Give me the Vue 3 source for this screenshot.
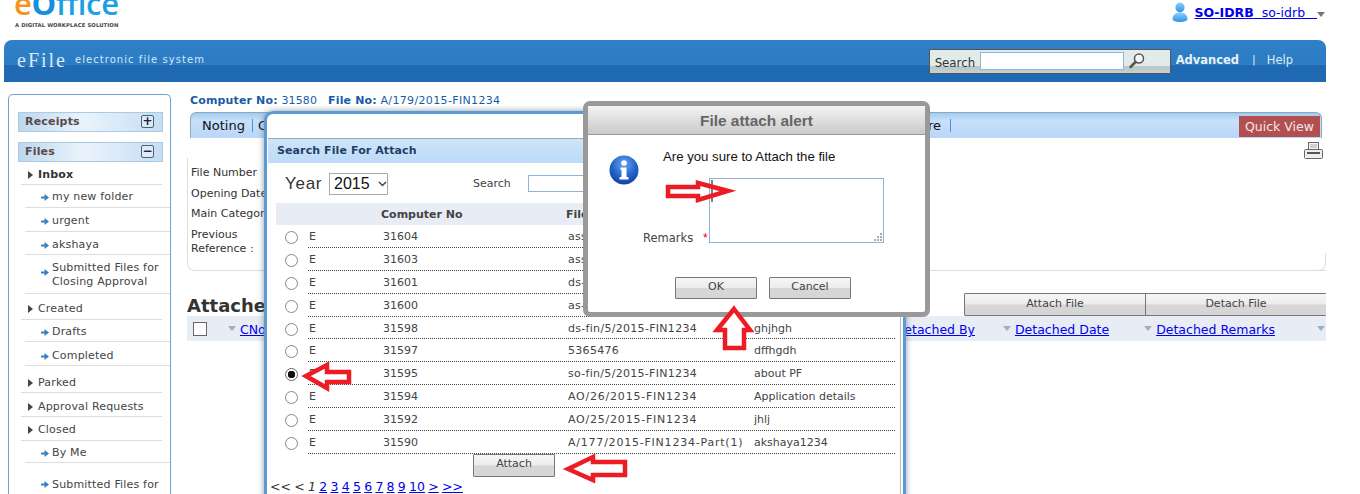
<script setup>
const sideRows = [
  { t: 'Inbox', h: 23, main: true, bold: true },
  { t: 'my new folder', h: 23 },
  { t: 'urgent', h: 24 },
  { t: 'akshaya', h: 23, lift: true },
  { t: 'Submitted Files for Closing Approval', h: 39, wide: true },
  { t: 'Created', h: 26, main: true },
  { t: 'Drafts', h: 22, lift: true },
  { t: 'Completed', h: 24, lift: true },
  { t: 'Parked', h: 27, main: true, lift: true },
  { t: 'Approval Requests', h: 24, main: true, lift: true },
  { t: 'Closed', h: 24, main: true },
  { t: 'By Me', h: 22, lift: true },
  { t: 'Submitted Files for Closing Approval', h: 46, wide: true, lift: true }
]
const files = [
  ['31604', 'assam/1/2015-FIN1234', 'asdf'],
  ['31603', 'assam/2/2015-FIN1234', 'asdf'],
  ['31601', 'ds-fin/7/2015-FIN1234', 'test'],
  ['31600', 'as-fin/3/2015-FIN1234', 'test'],
  ['31598', 'ds-fin/5/2015-FIN1234', 'ghjhgh'],
  ['31597', '5365476', 'dffhgdh'],
  ['31595', 'so-fin/5/2015-FIN1234', 'about PF'],
  ['31594', 'AO/26/2015-FIN1234', 'Application details'],
  ['31592', 'AO/25/2015-FIN1234', 'jhlj'],
  ['31590', 'A/177/2015-FIN1234-Part(1)', 'akshaya1234']
]
const pages = [2, 3, 4, 5, 6, 7, 8, 9, 10, '>', '>>']
</script>

<template>
  <div class="page">
    <header class="top">
      <div class="logo">
        <div class="logo-word"><span class="l-e">e</span><span class="l-o">O</span><span class="l-f">ffice</span></div>
        <div class="logo-tag">A DIGITAL WORKPLACE SOLUTION</div>
      </div>
      <div class="user">
        <svg width="16" height="20" viewBox="0 0 16 20">
          <defs><linearGradient id="ug" x1="0" y1="0" x2="0" y2="1"><stop offset="0" stop-color="#8fd0fa"/><stop offset="1" stop-color="#2f93e6"/></linearGradient></defs>
          <ellipse cx="8" cy="5.500" rx="4.600" ry="5" fill="url(#ug)"/>
          <path d="M0.500 17c0-4 3-6.500 7.500-6.500s7.500 2.500 7.500 6.500c0 1.800-3.500 3-7.500 3s-7.500-1.200-7.500-3z" fill="url(#ug)"/>
        </svg>
        <a class="user-link"><b>SO-IDRB</b>&nbsp; so-idrb &nbsp;&nbsp;</a>
        <i class="user-caret"></i>
      </div>
    </header>

    <div class="bar">
      <div class="brand"><span class="brand-name">eFile</span><span class="brand-sub">electronic file system</span></div>
      <div class="bar-right">
        <div class="search">
          <span class="search-label">Search</span>
          <span class="search-input"></span>
          <svg width="18" height="18" viewBox="0 0 18 18">
            <circle cx="11" cy="6.500" r="4.500" fill="#f4f7f6" stroke="#555" stroke-width="1.500"/>
            <path d="M7.500 10 L2.500 15" stroke="#555" stroke-width="2.500" stroke-linecap="round"/>
          </svg>
        </div>
        <b class="adv">Advanced</b><span class="pipe">|</span><span class="help">Help</span>
      </div>
    </div>

    <div class="layout">
      <aside class="side">
        <div class="side-head">Receipts<span class="pm">+</span></div>
        <div class="side-head second">Files<span class="pm">−</span></div>
        <div v-for="(r, i) in sideRows" :key="i" class="row" :class="{ main: r.main, bold: r.bold, lift: r.lift }" :style="{ height: r.h + 'px' }">
          <i v-if="r.main" class="tri"></i>
          <svg v-else class="arr" width="8" height="7" viewBox="0 0 8 7"><path d="M0 2.500h3.500V0L8 3.500 3.500 7V4.500H0z" fill="#3a7fc4"/></svg>
          <span :class="{ wrap: r.wide }">{{ r.t }}</span>
        </div>
      </aside>

      <main class="content">
        <div class="crumb"><b>Computer No:</b> 31580 &nbsp;&nbsp;<b>File No:</b> <span class="crumb-val">A/179/2015-FIN1234</span></div>
        <div class="tabs">
          <div class="tab-first">Noting</div><i class="tab-sep"></i><span class="tab-c">C</span>
          <span class="tab-re">re</span><i class="tab-sep last"></i>
          <span class="quick">Quick View</span>
        </div>
        <div class="print-row">
          <svg width="19" height="17" viewBox="0 0 19 17" fill="none" stroke="#666">
            <rect x="4.500" y="0.500" width="10" height="7" fill="#f4f4f4"/>
            <path d="M6 3h7M6 5h7" stroke="#aaa"/>
            <rect x="0.500" y="7.500" width="18" height="9" rx="1" fill="#eee"/>
            <rect x="3" y="10" width="13" height="2" fill="#555" stroke="none"/>
          </svg>
        </div>
        <section class="info">
          <div class="info-row">File Number</div>
          <div class="info-row">Opening Date</div>
          <div class="info-row">Main Category</div>
          <div class="info-row two">Previous<br>Reference :</div>
        </section>
        <div class="att-row">
          <h2>Attached Files</h2>
          <div class="att-btns"><button class="btn wide">Attach File</button><button class="btn wide">Detach File</button></div>
        </div>
        <div class="thead">
          <span class="cb"></span>
          <i class="drop first"></i><a class="cno">CNo</a>
          <a class="dby">Detached By</a>
          <i class="drop"></i><a class="ddate">Detached Date</a>
          <i class="drop"></i><a class="drem">Detached Remarks</a>
          <i class="drop end"></i>
        </div>
      </main>
    </div>

    <div class="modal">
      <div class="modal-title">Search File For Attach</div>
      <div class="filter">
        <span class="year">Year</span>
        <span class="select">2015<svg width="9" height="6" viewBox="0 0 9 6"><path d="M1 1l3.500 3.500L8 1" fill="none" stroke="#444" stroke-width="1.500"/></svg></span>
        <span class="f-search">Search</span><span class="f-input"></span>
      </div>
      <div class="grid-head"><span></span><span></span><b>Computer No</b><b class="h-file">File No</b></div>
      <div v-for="(f, i) in files" :key="f[0]" class="f-row">
        <input type="radio" class="radio" name="file" :checked="i === 6">
        <div class="f-cells">
          <span class="c-e">E</span><span class="c-no">{{ f[0] }}</span><span class="c-file" :class="{ caps: f[1][0] === 'A' }">{{ f[1] }}</span><span>{{ f[2] }}</span>
        </div>
      </div>
      <div class="attach-wrap"><button class="btn attach">Attach</button></div>
      <div class="pager">&lt;&lt; &lt; <em>1</em> <template v-for="p in pages" :key="p"><a>{{ p }}</a>{{ ' ' }}</template></div>
    </div>

    <div class="alert">
      <div class="alert-title">File attach alert</div>
      <div class="alert-body">
        <svg class="info-ico" width="30" height="30" viewBox="0 0 30 30">
          <defs>
            <radialGradient id="ib" cx="0.5" cy="0.3" r="0.75"><stop offset="0" stop-color="#6aa6ec"/><stop offset="0.6" stop-color="#1f5fc8"/><stop offset="1" stop-color="#123c94"/></radialGradient>
          </defs>
          <circle cx="15" cy="15" r="14.500" fill="url(#ib)"/>
          <circle cx="15" cy="8" r="2.800" fill="#fff"/>
          <path d="M11.500 12.500h6v9.500h2v2.500h-9V22h2v-7h-1z" fill="#fff"/>
        </svg>
        <div class="alert-main">
          <p>Are you sure to Attach the file</p>
          <div class="rem">
            <span class="rem-label">Remarks</span><span class="star">*</span>
            <div class="ta">
              <svg class="grip" width="9" height="9" viewBox="0 0 9 9" fill="#aaa"><rect x="7" y="1" width="2" height="2"/><rect x="4" y="4" width="2" height="2"/><rect x="7" y="4" width="2" height="2"/><rect x="1" y="7" width="2" height="2"/><rect x="4" y="7" width="2" height="2"/><rect x="7" y="7" width="2" height="2"/></svg>
            </div>
          </div>
        </div>
      </div>
      <div class="alert-btns"><button class="btn attach short">OK</button><button class="btn attach short">Cancel</button></div>
    </div>

    <svg class="marks" width="1360" height="494" viewBox="0 0 1360 494">
      <path d="M712 180V202" stroke="#000" stroke-width="1"/>
      <g stroke="#ed1c24" stroke-width="4.500" stroke-linejoin="miter">
        <path d="M668 187H698V183L728 191 698 200V196H668Z" fill="none"/>
        <path d="M734 309L750 330H744V348H725V330H717Z" fill="#fff"/>
        <path d="M306 376L327 365V372H349V382H327V388Z" fill="#fff"/>
        <path d="M568 469L593 457V462H625V475H593V480Z" fill="#fff"/>
      </g>
    </svg>
  </div>
</template>

<style>
html, body { margin: 0; height: 494px; overflow: hidden; background: #fff; }
</style>

<style scoped>
.page { position: relative; width: 1360px; height: 494px; overflow: hidden; font-family: "DejaVu Sans", sans-serif; font-size: 11px; color: #333; }

.top { height: 40px; display: flex; justify-content: space-between; }
.logo { padding-left: 14px; }
.logo-word { font-family: "Open Sans", sans-serif; font-size: 31px; line-height: 38px; margin-top: -16px; height: 34px; font-weight: 600; letter-spacing: -0.3px; }
.l-e { color: #f6921e; }
.l-o { color: #1590dd; font-weight: 700; }
.l-f { color: #1c9fe4; }
.logo-tag { font-size: 5.300px; font-weight: 700; color: #444; line-height: 8px; margin-top: 3px; padding-left: 1px; letter-spacing: 0.1px; }
.user { display: flex; align-items: flex-start; padding: 2px 35px 0 0; gap: 7px; }
.user-link { color: #00e; text-decoration: underline; font-size: 12.500px; line-height: 21px; white-space: pre; }
.user-caret { width: 0; height: 0; border: 4px solid transparent; border-top: 5px solid #777; margin: 10px 0 0 -7px; }

.bar { margin: 0 34px 0 4px; height: 42px; border-radius: 8px 8px 0 0; background: linear-gradient(#2f80c6 0, #2b7cc3 56%, #4a90cc 57%, #2069b3 60%, #2069b3 100%); display: flex; justify-content: space-between; }
.brand { padding: 9px 0 0 13px; display: flex; align-items: baseline; height: 33px; box-sizing: border-box; }
.brand-name { font-family: "Liberation Serif", serif; font-size: 20px; letter-spacing: 2px; color: #dbe8f3; }
.brand-sub { font-size: 10px; letter-spacing: 1.050px; color: #d5e7f5; margin-left: 8px; position: relative; top: -4px; font-weight: 500; }
.bar-right { display: flex; align-items: flex-start; padding-top: 9px; margin-right: 13px; }
.search { width: 240px; height: 23px; border: 1px solid #555; display: flex; align-items: flex-start; background: linear-gradient(#e3ebe8 0, #e3ebe8 70%, #b9c6c6 72%, #c7d2d2 100%); margin-right: 5px; }
.search-label { padding: 6px 5px 0 5px; color: #333; font-size: 11.800px; line-height: 14px; }
.search-input { width: 142px; height: 16px; background: #fff; border: 1px solid #8fb3dc; margin-top: 2px; }
.search svg { margin: 2px 0 0 4px; }
.adv { color: #e8f1f8; margin-top: 4px; font-size: 11.500px; }
.pipe { color: #dcebf6; margin: 4px 11px 0 13px; }
.help { color: #dcebf6; margin-right: 20px; margin-top: 4px; font-size: 11.500px; }

.layout { display: flex; padding-top: 12px; }
.side { margin-left: 8px; width: 161px; height: 420px; border: 1px solid #6ea2cf; border-bottom: 0; border-radius: 5px 5px 0 0; padding-top: 17px; letter-spacing: 0.180px; }
.side-head { margin-left: 9px; width: 137px; height: 18px; border: 1px solid #a9cbe6; background: linear-gradient(90deg, #bcd8f0, #eaf3fb 45%, #c5def3); font-weight: 700; color: #5b4a4a; line-height: 18px; padding-left: 6px; position: relative; }
.side-head.second { margin-top: 10px; }
.pm { position: absolute; right: 8px; top: 2px; width: 11px; height: 11px; border: 1px solid #4a6278; border-radius: 2px; background: #dcebf7; color: #223; text-align: center; line-height: 10px; font-size: 12px; font-weight: 700; letter-spacing: 0; }
.row { box-sizing: border-box; margin-left: 16px; border-bottom: 1px solid #ddd; display: flex; align-items: flex-end; padding: 0 0 3px 16px; gap: 3px; color: #444; line-height: 14px; }
.row.lift { padding-bottom: 2px; }
.row .arr { margin-bottom: 3px; }
.row.main { margin-left: 12px; margin-right: 8px; padding-left: 7px; gap: 5px; }
.row.bold { font-weight: 700; color: #333; padding-bottom: 2px; }
.tri { width: 0; height: 0; border: 4px solid transparent; border-left: 5px solid #444; border-right: 0; margin-bottom: 3px; }
.wrap { width: 115px; padding-bottom: 1px; }
.lift .wrap { padding-bottom: 0; }
.row:has(.wrap) .arr { align-self: center; margin-bottom: 0; }

.content { margin-left: 16px; width: 1139px; }
.crumb { height: 14px; line-height: 14px; padding-left: 3px; color: #1a5ba6; letter-spacing: 0.150px; }
.crumb-val { letter-spacing: 0.350px; }
.tabs { margin: 4px 4px 0 3px; height: 26px; box-sizing: border-box; border: 1px solid #8fa9b8; border-bottom: 0; border-radius: 6px 6px 0 0; background: linear-gradient(#9fcbf2, #c8e0fa 30%, #b9d7f8); display: flex; align-items: center; position: relative; font-size: 13px; color: #111; }
.tab-first { padding-left: 11px; width: 50px; }
.tab-sep { width: 1px; height: 13px; background: #4b92d2; }
.tab-c { margin-left: 5px; }
.tab-re { margin-left: auto; margin-right: 9px; }
.tab-sep.last { margin-right: 370px; }
.quick { position: absolute; right: 1px; top: 3px; width: 81px; height: 21px; background: #b25050; color: #f6e9e9; line-height: 21px; text-align: center; font-size: 12.500px; }
.print-row { height: 20px; display: flex; justify-content: flex-end; padding: 4px 3px 0 0; box-sizing: border-box; }
.info { height: 113px; box-sizing: border-box; border: 1px solid #ddd; border-top: 0; border-right: 0; border-radius: 0 0 0 8px; padding: 8px 0 0 3px; color: #333; position: relative; }
.info::after { content: ""; position: absolute; right: 0; bottom: -1px; width: 9px; height: 18px; box-sizing: border-box; border-right: 1px solid #ddd; border-bottom: 1px solid #ddd; border-radius: 0 0 8px 0; background: #fff; }
.info-row { height: 20.500px; line-height: 14px; }
.att-row { height: 45px; display: flex; justify-content: space-between; align-items: flex-end; }
.att-row h2 { margin: 0 0 -2px; font-size: 18px; line-height: 24px; color: #333; font-weight: 700; }
.att-btns { display: flex; height: 23px; }
.btn { font-family: "DejaVu Sans", sans-serif; font-size: 11px; color: #444; border: 1px solid #777; border-radius: 1px; background: linear-gradient(#f6f6f6 0, #ececec 48%, #d6d6d6 52%, #d6d6d6 100%); padding: 0 0 3px; box-sizing: border-box; }
.btn.wide { width: 182px; height: 23px; }
.att-btns .btn + .btn { margin-left: -1px; border-right: 0; width: 181px; }
.thead { height: 25px; background: #e8ecf4; display: flex; align-items: center; position: relative; }
.thead a { color: #00e; text-decoration: underline; font-size: 12.500px; position: relative; top: 1px; }
.cb { width: 12px; height: 12px; border: 1px solid #666; background: #fff; margin-left: 6px; }
.drop { width: 0; height: 0; border: 4.500px solid transparent; border-top: 5px solid #9ab1c2; border-bottom: 0; margin-right: 4px; }
.drop.first { margin-left: 21px; margin-right: 4px; }
.dby { margin-left: 629px; margin-right: 28px; }
.ddate { margin-right: 35px; }
.drem { margin-right: 42px; }
.drop.end { margin: 0; }

.modal { position: absolute; left: 264px; top: 111px; width: 642px; height: 400px; box-sizing: border-box; border: 3px solid #5c9ad2; border-bottom: 0; border-radius: 9px 9px 0 0; background: linear-gradient(to left, #fff 2px, #bbb 2px, #bbb 3px, #fff 3px); box-shadow: 0 0 6px rgba(90, 110, 130, 0.7); padding-top: 24px; padding-right: 3px; }
.modal-title { height: 25px; margin-left: 1px; border-top: 1px solid #9ab; box-sizing: border-box; background: linear-gradient(#cfe4f8, #bcdbf8); font-weight: 700; color: #1f3f66; line-height: 23px; padding-left: 9px; letter-spacing: 0.100px; }
.filter { height: 40px; display: flex; align-items: center; box-sizing: border-box; padding: 1px 0 0 18px; }
.year { font-size: 17px; color: #333; width: 44px; font-family: "Liberation Sans", sans-serif; letter-spacing: 0.700px; }
.select { width: 59px; height: 22px; box-sizing: border-box; border: 1px solid #aaa; font-family: "Liberation Sans", sans-serif; font-size: 16px; color: #111; line-height: 20px; padding-left: 4px; display: flex; align-items: center; gap: 8px; }
.f-search { margin-left: 85px; color: #444; }
.f-input { width: 200px; height: 15px; border: 1px solid #8fb3dc; margin-left: 17px; }
.grid-head { margin-left: 9px; width: 619px; height: 22px; background: #e8ecf4; display: grid; grid-template-columns: 32px 73px 185px 1fr; align-items: center; color: #444; }
.f-row { margin-left: 9px; height: 22.900px; display: flex; color: #444; }
.radio { appearance: none; width: 13px; height: 13px; margin: 6px 10px 0 9px; border: 1.500px solid #888; border-radius: 50%; box-sizing: border-box; background: #fff; flex: none; }
.radio:checked { border-color: #666; background: radial-gradient(circle, #111 0, #111 3.500px, #fff 4px); }
.f-cells { flex: 1; display: grid; grid-template-columns: 75px 185px 186px 1fr; border-bottom: 1px dotted #444; margin-right: 5px; align-items: center; white-space: nowrap; overflow: hidden; padding-top: 1px; box-sizing: border-box; }
.c-e { padding-left: 1px; }
.c-file { letter-spacing: 0.300px; }
.c-file.caps { letter-spacing: 0.780px; }
.attach-wrap { padding-left: 206px; height: 24px; }
.attach { width: 82px; height: 23px; }
.attach.short { height: 22px; }
.pager { margin: 2px 0 0 3px; font-size: 12.500px; color: #333; white-space: pre-wrap; line-height: 14px; word-spacing: -0.700px; }
.pager a { color: #00e; text-decoration: underline; }

.alert { position: absolute; left: 583px; top: 101px; width: 347px; height: 216px; box-sizing: border-box; border: 5px solid #999; border-radius: 7px; background: #fff; font-family: "Liberation Sans", sans-serif; display: flex; flex-direction: column; }
.alert-title { height: 29px; flex: none; box-sizing: border-box; background: linear-gradient(#f4f4f4, #c9c9c9); border-bottom: 1px solid #999; color: #666; font-weight: 700; font-size: 15.400px; line-height: 29px; text-align: center; }
.alert-body { display: flex; padding: 20px 0 0 21px; height: 142px; box-sizing: border-box; flex: none; }
.info-ico { flex: none; }
.alert-main { margin: -5px 0 0 24px; }
.alert-main p { margin: 0; font-size: 13.200px; color: #111; line-height: 14px; }
.rem { display: flex; align-items: flex-end; margin: 14px 0 0 -20px; }
.rem-label { font-family: "DejaVu Sans", sans-serif; font-size: 11.500px; color: #444; line-height: 14px; width: 60px; margin-bottom: -2px; }
.star { color: #e00; width: 6px; font-size: 12px; line-height: 14px; margin-bottom: -2px; }
.ta { width: 175px; height: 65px; box-sizing: border-box; border: 1px solid #8fb3dc; position: relative; }
.grip { position: absolute; right: 1px; bottom: 1px; }
.alert-btns { display: flex; gap: 12px; padding-left: 87px; }

.marks { position: absolute; left: 0; top: 0; pointer-events: none; }
</style>
